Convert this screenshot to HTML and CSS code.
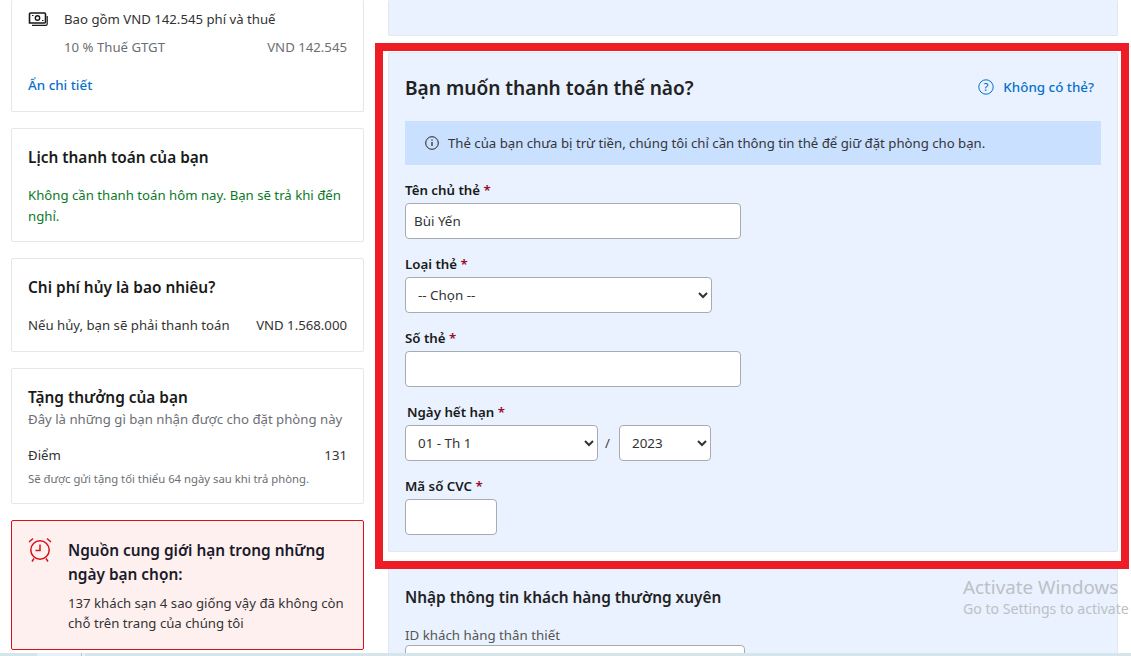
FILE: index.html
```html
<!DOCTYPE html>
<html lang="vi">
<head>
<meta charset="utf-8">
<title>Thanh toán</title>
<link rel="stylesheet" href="styles.css">
</head>
<body>
<div class="page">
  <aside class="side">
    <section class="card card-top">
      <div class="tax-row">
        <svg class="money" viewBox="0 0 20 14" width="20" height="14"><path d="M1.5 11V2a1 1 0 0 1 1-1h14a1 1 0 0 1 1 1v8a1 1 0 0 1-1 1z" fill="none" stroke="#1a1a1a" stroke-width="1.6"/><circle cx="9.5" cy="6" r="2.2" fill="none" stroke="#1a1a1a" stroke-width="1.4"/><path d="M4 3.5h1.5M14 8.5h1.5" stroke="#1a1a1a" stroke-width="1.2"/><path d="M19.2 4v8a1.3 1.3 0 0 1-1.3 1.3H4" fill="none" stroke="#1a1a1a" stroke-width="1.2"/></svg>
        <span>Bao gồm VND 142.545 phí và thuế</span>
      </div>
      <div class="tax-detail"><span>10 % Thuế GTGT</span><span>VND 142.545</span></div>
      <a class="link hide-link">Ẩn chi tiết</a>
    </section>
    <section class="card card-plan">
      <h3>Lịch thanh toán của bạn</h3>
      <p class="green">Không cần thanh toán hôm nay. Bạn sẽ trả khi đến nghỉ.</p>
    </section>
    <section class="card card-cancel">
      <h3>Chi phí hủy là bao nhiêu?</h3>
      <div class="between"><span>Nếu hủy, bạn sẽ phải thanh toán</span><span>VND 1.568.000</span></div>
    </section>
    <section class="card card-reward">
      <h3>Tặng thưởng của bạn</h3>
      <p class="muted">Đây là những gì bạn nhận được cho đặt phòng này</p>
      <div class="between points"><span>Điểm</span><span>131</span></div>
      <p class="small">Sẽ được gửi tặng tối thiểu 64 ngày sau khi trả phòng.</p>
    </section>
    <section class="alert">
      <svg class="clock" viewBox="0 0 24 26" width="24" height="26"><circle cx="12" cy="13" r="9.2" fill="none" stroke="#d8101c" stroke-width="1.5"/><path d="M12 7.5V13.5H7.5" fill="none" stroke="#d8101c" stroke-width="1.5"/><path d="M1 5 5 1.5M23 5 19 1.5M6 21.5 4 24.5M18 21.5 20 24.5" stroke="#d8101c" stroke-width="1.5"/></svg>
      <div>
        <h3>Nguồn cung giới hạn trong những ngày bạn chọn:</h3>
        <p>137 khách sạn 4 sao giống vậy đã không còn chỗ trên trang của chúng tôi</p>
      </div>
    </section>
  </aside>
  <main class="main">
    <section class="panel panel-top"></section>
    <section class="panel panel-pay">
      <header class="pay-head">
        <h2>Bạn muốn thanh toán thế nào?</h2>
        <a class="link help"><svg viewBox="0 0 16 16" width="16" height="16"><circle cx="8" cy="8" r="7.2" fill="none" stroke="#0770cd" stroke-width="1"/><text x="8" y="11.6" text-anchor="middle" class="qmark">?</text></svg>Không có thẻ?</a>
      </header>
      <div class="notice"><svg viewBox="0 0 14 14" width="14" height="14"><circle cx="7" cy="7" r="6.3" fill="none" stroke="#222" stroke-width="1"/><path d="M7 6v4M7 3.6v1.2" stroke="#222" stroke-width="1.2"/></svg><span>Thẻ của bạn chưa bị trừ tiền, chúng tôi chỉ cần thông tin thẻ để giữ đặt phòng cho bạn.</span></div>
      <div class="field">
        <label>Tên chủ thẻ <em>*</em></label>
        <input class="input wide" type="text" value="Bùi Yến">
      </div>
      <div class="field">
        <label>Loại thẻ <em>*</em></label>
        <select class="input type"><option>-- Chọn --</option></select>
      </div>
      <div class="field">
        <label>Số thẻ <em>*</em></label>
        <input class="input wide" type="text">
      </div>
      <div class="field">
        <label class="indent">Ngày hết hạn <em>*</em></label>
        <div class="expiry">
          <select class="input month"><option>01 - Th 1</option></select>
          <span class="slash">/</span>
          <select class="input year"><option>2023</option></select>
        </div>
      </div>
      <div class="field">
        <label>Mã số CVC <em>*</em></label>
        <input class="input cvc" type="text">
      </div>
    </section>
    <section class="panel panel-loyal">
      <h3>Nhập thông tin khách hàng thường xuyên</h3>
      <label class="plain">ID khách hàng thân thiết</label>
      <input class="input loyal" type="text">
    </section>
  </main>
</div>
<div class="red-frame"></div>
<div class="watermark"><span class="wm-title">Activate Windows</span><span class="wm-sub">Go to Settings to activate</span></div>
<div class="bottom-bar"></div>
</body>
</html>
```
FILE: styles.css
```css
* { box-sizing: border-box; }
html, body { margin: 0; height: 656px; overflow: hidden; background: #fff; }
body { font-family: "Noto Sans", "Open Sans", sans-serif; font-size: 13.2px; color: #2a2a2e; position: relative; }
h2, h3, p { margin: 0; }
.page { display: flex; align-items: flex-start; padding-left: 11px; gap: 24px; }
.side { width: 353px; display: flex; flex-direction: column; gap: 16px; }
.main { width: 730px; display: flex; flex-direction: column; gap: 16px; }
.card { background: #fff; border: 1px solid #e4e6e8; border-radius: 2px; padding: 16px; }
.card h3 { font-size: 15.4px; font-weight: 600; line-height: 20px; color: #1a1a1a; }
.card-top { border-top: 0; height: 112px; padding: 10px 16px 0; }
.tax-row { display: flex; align-items: center; gap: 16px; line-height: 18px; color: #333; }
.money { flex: none; }
.tax-detail { display: flex; justify-content: space-between; padding-left: 36px; margin-top: 10px; line-height: 18px; color: #6b6f75; }
.link { color: #0770cd; font-weight: 500; font-size: 13.4px; }
.hide-link { display: block; margin-top: 20px; line-height: 18px; }
.card-plan { height: 114px; padding-top: 19px; }
.green { color: #0a7a28; line-height: 21px; margin-top: 17px; }
.card-cancel { height: 94px; padding-top: 19px; }
.between { display: flex; justify-content: space-between; }
.card-cancel .between { margin-top: 17px; line-height: 20px; color: #333; }
.card-reward { height: 136px; padding-top: 19px; }
.muted { color: #6b6f75; line-height: 18px; margin-top: 2px; }
.points { margin-top: 18px; line-height: 18px; color: #333; }
.small { font-size: 11.3px; color: #6b6f75; line-height: 16px; margin-top: 7px; }
.alert { display: flex; gap: 16px; height: 130px; background: #fff0f0; border: 1px solid #d8101c; border-radius: 2px; padding: 16px; }
.clock { flex: none; }
.alert h3 { font-size: 15.4px; font-weight: 600; line-height: 24px; color: #1a1a2a; margin-top: 2px; }
.alert p { line-height: 20px; margin-top: 6px; color: #333; }
.panel { background: #e9f2fe; border: 1px solid #e2e7ee; border-radius: 2px; }
.panel-top { height: 36px; border-top: 0; }
.panel-pay { height: 500px; padding: 0 16px; }
.pay-head { display: flex; justify-content: space-between; align-items: center; height: 68px; padding-right: 7px; }
.pay-head h2 { font-size: 19.1px; font-weight: 600; color: #222; margin-top: 2px; }
.help { display: flex; align-items: center; gap: 9px; }
.qmark { font-size: 11px; fill: #0770cd; font-family: "Noto Sans", sans-serif; }
.notice { display: flex; align-items: center; gap: 9px; height: 44px; background: #cae0ff; padding-left: 20px; color: #33353a; }
.notice svg { flex: none; }
.field { margin-top: 16px; }
label { display: block; font-size: 13.3px; font-weight: 600; line-height: 18px; color: #1a1a1a; margin-bottom: 4px; }
label.indent { margin-left: 2px; }
label em { color: #9a0a2a; font-style: normal; }
.input { display: block; height: 36px; border: 1px solid #a8abb0; border-radius: 4px; background: #fff; font: 13.4px "Noto Sans", sans-serif; color: #333; padding: 0 8px; }
.wide { width: 336px; }
.type { width: 307px; }
.expiry { display: flex; align-items: center; gap: 7px; }
.month { width: 193px; }
.year { width: 92px; }
.slash { width: 7px; color: #444; }
.cvc { width: 92px; }
.panel-loyal { height: 88px; overflow: hidden; padding: 20px 16px 0; border-top: 0; }
.panel-loyal h3 { font-size: 15.4px; font-weight: 600; color: #222; line-height: 20px; }
.plain { font-weight: 400; margin: 18px 0 1px; color: #555; }
.loyal { width: 340px; }
.red-frame { position: absolute; left: 375px; top: 43px; width: 754px; height: 526px; border: 8px solid #ee1c25; }
.watermark { position: absolute; left: 963px; top: 576px; white-space: nowrap; color: #bdc0c6; display: flex; flex-direction: column; }
.wm-title { font-size: 18.8px; line-height: 22px; }
.wm-sub { font-size: 14.1px; line-height: 24px; margin-top: -1px; }
.bottom-bar { position: absolute; left: 0; right: 0; bottom: 0; height: 3px; background: linear-gradient(to right, #d5e5ec 37px, #e9f0f3 37px, #e9f0f3 81px, #b9c4c9 81px, #b9c4c9 82px, #e9f0f3 82px, #e9f0f3 85px, #d5e5ec 85px); }
```
